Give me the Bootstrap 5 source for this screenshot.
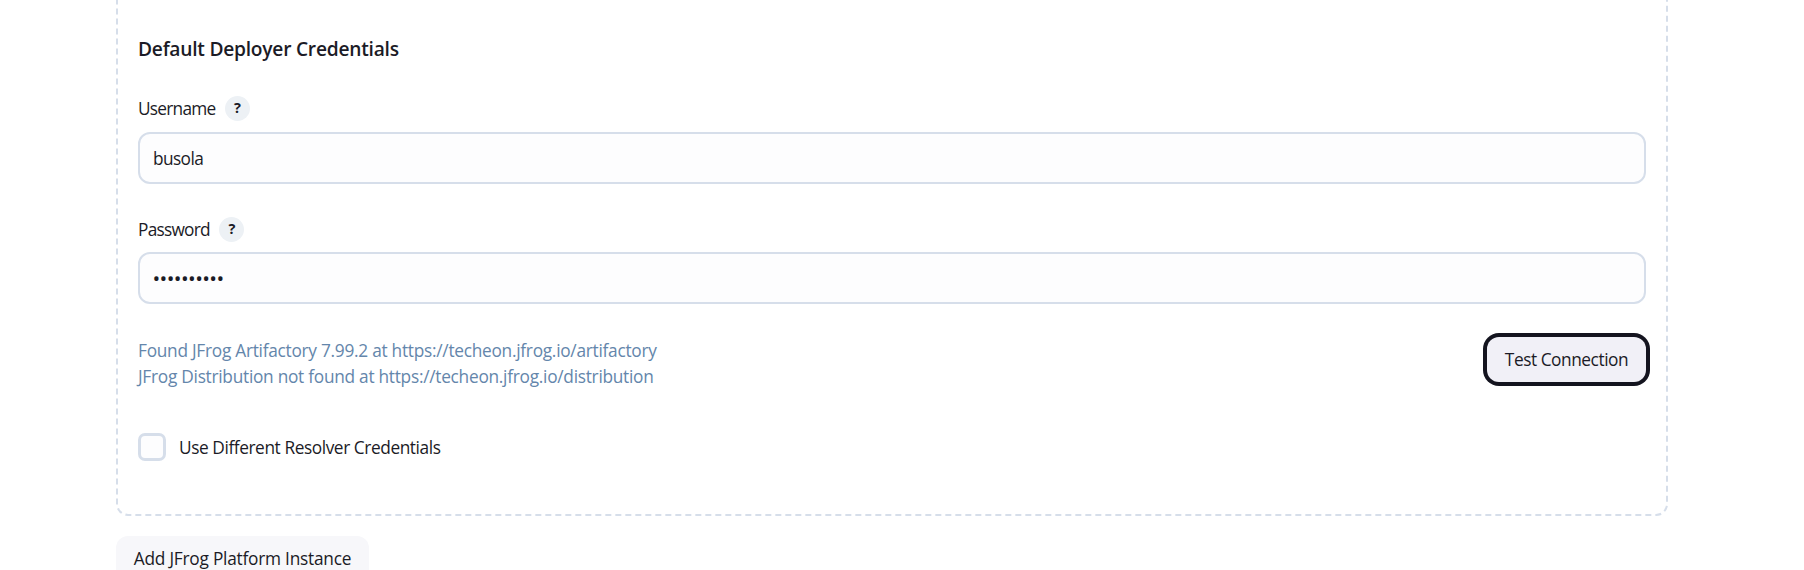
<!DOCTYPE html>
<html lang="en">
<head>
<meta charset="utf-8">
<meta name="viewport" content="width=device-width, initial-scale=1">
<title>JFrog Platform Instance</title>
<link href="https://cdn.jsdelivr.net/npm/bootstrap@5.3.0/dist/css/bootstrap.min.css" rel="stylesheet">
<style>
body{font-family:"Open Sans","Noto Sans",sans-serif;font-size:17.3px;line-height:26px;color:#1b1b26;background:#fff;letter-spacing:-.45px;height:570px;overflow:hidden}
.page-col{width:1552px;margin-left:116px}
.instance-box{border:2px dashed #d6deea;border-radius:12px;margin-top:-21px;height:537px;padding:0 20px}
.section-title{font-size:19.2px;font-weight:600;line-height:28px;letter-spacing:-.24px;padding-top:54px;margin:0}
.field-group{margin-top:33px}
.field-label{height:25px;gap:9.5px;letter-spacing:-.75px}
.help-dot{width:25px;height:25px;background:#edf1f5;font-size:14.5px;font-weight:700;letter-spacing:0;line-height:1}
.form-control{height:52px;border:2px solid #d6deea;border-radius:12px;background:#fdfdfe;color:#1b1b26;padding:0 13px;font-size:17.3px;letter-spacing:-.6px;margin-top:11px}
.form-control[type=password]{font-size:20.5px;letter-spacing:-.6px;margin-top:10px;padding-top:0;padding-left:12.5px}
.result-row{margin-top:33px}
.status-text{color:#6486ab;letter-spacing:-.27px;line-height:26.4px;padding-top:1px}
.btn{font-size:17.3px;letter-spacing:-.45px;line-height:26px;color:#1b1b26;border:0}
.btn-test{width:159px;height:45px;padding:0;border-radius:12px;background:#f1f0f7;box-shadow:0 0 0 4px #14141f}
.btn-add{width:253px;height:45px;padding:0;border-radius:12px;background:#f7f7fa;letter-spacing:-.23px;margin-top:20px}
.resolver-row{height:28px;margin-top:42px;gap:13px}
.resolver-row label{letter-spacing:-.42px;padding-top:2px}
.form-check-input{width:28px;height:28px;border:3px solid #d6deea;border-radius:7px!important;background-color:#fdfdfe}
</style>
</head>
<body>
<main class="page-col">
  <section class="instance-box">
    <h2 class="section-title">Default Deployer Credentials</h2>
    <div class="field-group">
      <label class="field-label d-flex align-items-center" for="user"><span>Username</span><span class="help-dot rounded-circle d-flex align-items-center justify-content-center">?</span></label>
      <input id="user" type="text" class="form-control" value="busola">
    </div>
    <div class="field-group">
      <label class="field-label d-flex align-items-center" for="pass"><span>Password</span><span class="help-dot rounded-circle d-flex align-items-center justify-content-center">?</span></label>
      <input id="pass" type="password" class="form-control" value="techeon123">
    </div>
    <div class="result-row d-flex justify-content-between align-items-start">
      <div class="status-text">Found JFrog Artifactory 7.99.2 at https://techeon.jfrog.io/artifactory<br>JFrog Distribution not found at https://techeon.jfrog.io/distribution</div>
      <button class="btn btn-test" type="button">Test Connection</button>
    </div>
    <div class="resolver-row d-flex align-items-center">
      <input id="resolver" class="form-check-input m-0" type="checkbox"><label for="resolver">Use Different Resolver Credentials</label>
    </div>
  </section>
  <button class="btn btn-add d-block" type="button">Add JFrog Platform Instance</button>
</main>
<script src="https://cdn.jsdelivr.net/npm/bootstrap@5.3.0/dist/js/bootstrap.bundle.min.js"></script>
</body>
</html>
